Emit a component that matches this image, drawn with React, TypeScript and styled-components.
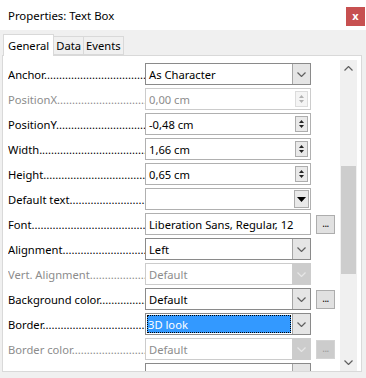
import React from "react";
import styled, { createGlobalStyle } from "styled-components";

const GlobalStyle = createGlobalStyle`
  html, body {
    margin: 0;
    padding: 0;
  }
  body {
    font-family: "Noto Sans", "Liberation Sans", sans-serif;
    font-size: 11.2px;
    color: #000;
  }
`;

const Window = styled.div`
  width: 366px;
  height: 378px;
  background: #f0f0f0;
  overflow: hidden;
  display: flex;
  flex-direction: column;
`;

const TitleBar = styled.div`
  height: 30px;
  flex: none;
  background: #fff;
  display: flex;
  align-items: center;
  justify-content: space-between;
  padding: 0 1px 0 8px;
  box-sizing: border-box;
  font-size: 11.4px;
`;

const CloseButton = styled.div`
  width: 19px;
  height: 19px;
  margin-top: 2px;
  background: #c75050;
  color: #fff;
  font-weight: bold;
  font-size: 11px;
  line-height: 17px;
  text-align: center;
`;

const TabStrip = styled.div`
  height: 25px;
  flex: none;
  display: flex;
  align-items: flex-end;
  padding-left: 4px;
`;

const Tab = styled.div<{ $active?: boolean }>`
  position: relative;
  z-index: 1;
  box-sizing: border-box;
  height: ${(p) => (p.$active ? "22px" : "19px")};
  margin-bottom: ${(p) => (p.$active ? "-1px" : "0")};
  padding: ${(p) => (p.$active ? "2px 4px 0 4px" : "0 2px")};
  background: ${(p) => (p.$active ? "#fff" : "#f0f0f0")};
  border: 1px solid #d9d9d9;
  border-bottom: ${(p) => (p.$active ? "none" : "1px solid #d9d9d9")};
  margin-left: -1px;
  line-height: 17px;
`;

const Panel = styled.div`
  margin-left: 2px;
  width: 360px;
  height: 317px;
  box-sizing: border-box;
  border: 1px solid #d9d9d9;
  background: #fff;
  display: flex;
  overflow: hidden;
  flex: none;
`;

const Content = styled.div`
  flex: 1;
  padding: 7px 0 0 5px;
  display: flex;
  flex-direction: column;
  gap: 3px;
`;

const Row = styled.div`
  display: grid;
  grid-template-columns: 137px 166px auto;
  align-items: center;
  height: 22px;
  flex: none;
`;

const Label = styled.div<{ $disabled?: boolean }>`
  white-space: nowrap;
  overflow: hidden;
  color: ${(p) => (p.$disabled ? "#8c8c8c" : "#000")};
`;

const Field = styled.div<{ $combo?: boolean; $disabled?: boolean }>`
  height: 22px;
  box-sizing: border-box;
  border: 1px solid
    ${(p) => (p.$disabled ? "#cccccc" : p.$combo ? "#8a8a8a" : "#b0b0b0")};
  background: #fff;
  display: flex;
  align-items: stretch;
  color: ${(p) => (p.$disabled ? "#8c8c8c" : "#000")};
`;

const FieldText = styled.div<{ $selected?: boolean }>`
  flex: 1;
  display: flex;
  align-items: center;
  padding-left: 3px;
  white-space: nowrap;
  overflow: hidden;
  ${(p) =>
    p.$selected &&
    `
    background: #3399ff;
    color: #fff;
    margin: 1px;
    padding-left: 1px;
    outline: 1px dotted #000;
    outline-offset: -1px;
  `}
`;

const DropButton = styled.div<{ $disabled?: boolean }>`
  width: 17px;
  flex: none;
  border-left: 1px solid ${(p) => (p.$disabled ? "#cccccc" : "#a6a6a6")};
  background: ${(p) => (p.$disabled ? "#cccccc" : "#e5e5e5")};
  display: flex;
  align-items: center;
  justify-content: center;
`;

const SpinBox = styled.div<{ $disabled?: boolean }>`
  width: 13px;
  margin: 2px 2px 2px 0;
  box-sizing: border-box;
  border: 1px solid ${(p) => (p.$disabled ? "#dcdcdc" : "#adadad")};
  background: ${(p) => (p.$disabled ? "#f4f4f4" : "#e9e9e9")};
  display: flex;
  flex-direction: column;
  align-items: center;
  justify-content: space-evenly;
`;

const ListButton = styled.div`
  width: 15px;
  margin: 1px 1px 1px 0;
  box-sizing: border-box;
  border: 1px solid #adadad;
  background: #e9e9e9;
  display: flex;
  align-items: center;
  justify-content: center;
`;

const MoreButton = styled.div<{ $disabled?: boolean }>`
  width: 19px;
  height: 19px;
  margin-left: 5px;
  box-sizing: border-box;
  border: 1px solid ${(p) => (p.$disabled ? "#d4d4d4" : "#adadad")};
  background: ${(p) => (p.$disabled ? "#cccccc" : "#e1e1e1")};
  color: ${(p) => (p.$disabled ? "#9a9a9a" : "#000")};
  font-size: 10px;
  line-height: 15px;
  text-align: center;
  letter-spacing: -0.5px;
`;

const Scrollbar = styled.div`
  width: 17px;
  flex: none;
  margin: 4px 4px 0 0;
  height: 311px;
  background: #f0f0f0;
  display: flex;
  flex-direction: column;
`;

const ScrollArrow = styled.div`
  height: 17px;
  flex: none;
  display: flex;
  align-items: center;
  justify-content: center;
`;

const ScrollTrack = styled.div`
  flex: 1;
  display: flex;
  flex-direction: column;
`;

const ScrollThumb = styled.div`
  margin: 89px 1px 0 1px;
  height: 108px;
  background: #cdcdcd;
`;

const Chevron = ({ color = "#606060", up = false }: { color?: string; up?: boolean }) => (
  <svg width="9" height="5" viewBox="0 0 9 5">
    <path
      d={up ? "M0.5 4.5 L4.5 0.5 L8.5 4.5" : "M0.5 0.5 L4.5 4.5 L8.5 0.5"}
      stroke={color}
      strokeWidth="1.2"
      fill="none"
    />
  </svg>
);

const Tri = ({ up, color }: { up: boolean; color: string }) => (
  <svg width="5" height="3" viewBox="0 0 5 3">
    <polygon points={up ? "0,3 2.5,0 5,3" : "0,0 5,0 2.5,3"} fill={color} />
  </svg>
);

const dots = ".".repeat(80);

type Kind = "combo" | "spin" | "list" | "text";

interface Prop {
  label: string;
  value: string;
  kind: Kind;
  disabled?: boolean;
  selected?: boolean;
  more?: boolean;
}

const rows: Prop[] = [
  { label: "Anchor", value: "As Character", kind: "combo" },
  { label: "PositionX", value: "0,00 cm", kind: "spin", disabled: true },
  { label: "PositionY", value: "-0,48 cm", kind: "spin" },
  { label: "Width", value: "1,66 cm", kind: "spin" },
  { label: "Height", value: "0,65 cm", kind: "spin" },
  { label: "Default text", value: "", kind: "list" },
  { label: "Font", value: "Liberation Sans, Regular, 12", kind: "text", more: true },
  { label: "Alignment", value: "Left", kind: "combo" },
  { label: "Vert. Alignment", value: "Default", kind: "combo", disabled: true },
  { label: "Background color", value: "Default", kind: "combo", more: true },
  { label: "Border", value: "3D look", kind: "combo", selected: true },
  { label: "Border color", value: "Default", kind: "combo", disabled: true, more: true },
  { label: "", value: "Multi-line", kind: "combo" },
];

const PropRow = ({ p }: { p: Prop }) => (
  <Row>
    <Label $disabled={p.disabled}>
      {p.label}
      {p.label && dots}
    </Label>
    <Field $combo={p.kind === "combo"} $disabled={p.disabled}>
      <FieldText $selected={p.selected}>{p.value}</FieldText>
      {p.kind === "combo" && (
        <DropButton $disabled={p.disabled}>
          <Chevron color={p.disabled ? "#e6e6e6" : "#606060"} />
        </DropButton>
      )}
      {p.kind === "spin" && (
        <SpinBox $disabled={p.disabled}>
          <Tri up color={p.disabled ? "#b0b0b0" : "#222"} />
          <Tri up={false} color={p.disabled ? "#b0b0b0" : "#222"} />
        </SpinBox>
      )}
      {p.kind === "list" && (
        <ListButton>
          <svg width="9" height="5" viewBox="0 0 9 5">
            <polygon points="0,0 9,0 4.5,5" fill="#000" />
          </svg>
        </ListButton>
      )}
    </Field>
    {p.more ? <MoreButton $disabled={p.disabled}>...</MoreButton> : <span />}
  </Row>
);

export default function App() {
  return (
    <Window>
      <GlobalStyle />
      <TitleBar>
        <span>Properties: Text Box</span>
        <CloseButton>x</CloseButton>
      </TitleBar>
      <TabStrip>
        <Tab $active>General</Tab>
        <Tab>Data</Tab>
        <Tab>Events</Tab>
      </TabStrip>
      <Panel>
        <Content>
          {rows.map((p, i) => (
            <PropRow key={i} p={p} />
          ))}
        </Content>
        <Scrollbar>
          <ScrollArrow>
            <Chevron up color="#606060" />
          </ScrollArrow>
          <ScrollTrack>
            <ScrollThumb />
          </ScrollTrack>
          <ScrollArrow>
            <Chevron color="#606060" />
          </ScrollArrow>
        </Scrollbar>
      </Panel>
    </Window>
  );
}
